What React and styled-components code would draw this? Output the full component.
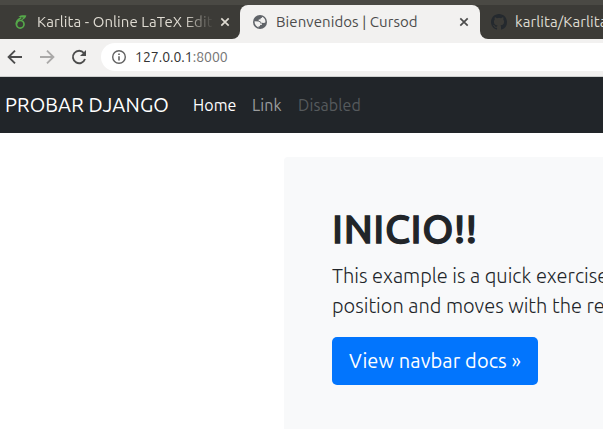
import React from "react";
import styled, { createGlobalStyle } from "styled-components";

const GlobalStyle = createGlobalStyle`
  *, *::before, *::after { box-sizing: border-box; }
  body {
    margin: 0;
    overflow: hidden;
    background: #fff;
    font-family: "Ubuntu", "Noto Sans", "Open Sans", sans-serif;
  }
`;

const Window = styled.div`
  width: 603px;
  height: 429px;
  overflow: hidden;
  display: flex;
  flex-direction: column;
`;

const TabStrip = styled.div`
  flex: none;
  height: 39px;
  padding-top: 5px;
  background: linear-gradient(#4a4944 0, #4a4944 5px, #3c3b37 5px);
  display: flex;
`;

const StripBase = styled.div`
  width: 100%;
  background: #f2f1f0;
  display: flex;
`;

const Tab = styled.div`
  flex: none;
  width: ${(p) => p.$width}px;
  height: 34px;
  padding: ${(p) => p.$padding};
  display: flex;
  align-items: center;
  background: ${(p) => (p.$active ? "#f2f1f0" : "#3c3b37")};
  color: ${(p) => (p.$active ? "#4c4c4c" : "#dfdbd2")};
  border-radius: ${(p) => p.$radius};
`;

const TabBack = styled.div`
  flex: none;
  background: linear-gradient(#3c3b37 50%, #f2f1f0 50%);
`;

const TabTitle = styled.span`
  flex: none;
  width: ${(p) => p.$width}px;
  overflow: hidden;
  white-space: nowrap;
  font-size: 15px;
  line-height: 20px;
  letter-spacing: 0.08px;
  mask-image: ${(p) => (p.$fade ? "linear-gradient(to right, #000 84%, transparent 101%)" : "none")};
`;

const TabGap = styled.span`
  flex: none;
  width: 8px;
`;

const Icon = styled.svg`
  flex: none;
  display: block;
  width: ${(p) => p.$size}px;
  height: ${(p) => p.$size}px;
  margin-right: ${(p) => p.$gap || 0}px;
`;

const Toolbar = styled.div`
  flex: none;
  height: 38px;
  padding: 4px 0 5px 5px;
  background: #f2f1f0;
  border-bottom: 1px solid #cdcfce;
  display: flex;
  align-items: center;
`;

const AddressBar = styled.div`
  flex: 1;
  height: 28px;
  padding-left: 10px;
  border-radius: 14px 0 0 14px;
  background: #fff;
  display: flex;
  align-items: center;
`;

const Address = styled.span`
  font-size: 14px;
  line-height: 20px;
  color: #333;
`;

const Port = styled.span`
  color: #757575;
`;

const Navbar = styled.nav`
  flex: none;
  height: 56px;
  padding-left: 5px;
  background: #212529;
  display: flex;
  align-items: center;
`;

const Brand = styled.a`
  width: 188px;
  color: #fff;
  font-size: 20px;
  line-height: 30px;
  letter-spacing: 0.12px;
  white-space: nowrap;
`;

const NavLink = styled.a`
  width: ${(p) => p.$width}px;
  color: ${(p) => p.$color};
  font-size: 16px;
  line-height: 24px;
  letter-spacing: 0.1px;
  white-space: nowrap;
`;

const Main = styled.main`
  flex: 1;
  padding: 24px 0 0 284px;
  background: #fff;
`;

const Hero = styled.section`
  width: 600px;
  height: 300px;
  padding: 48px;
  border-radius: 4px;
  background: #f8f9fa;
  color: #212529;
`;

const Heading = styled.h1`
  margin: 0 0 8px;
  font-size: 40px;
  line-height: 48px;
  font-weight: 500;
  letter-spacing: 0.6px;
  -webkit-text-stroke: 1.3px #212529;
`;

const Lead = styled.p`
  margin: 0 0 16px;
  font-size: 20px;
  line-height: 30px;
  font-weight: 300;
  white-space: nowrap;
`;

const LeadLine = styled.span`
  display: block;
`;

const Button = styled.a`
  display: inline-flex;
  align-items: center;
  justify-content: center;
  width: 206px;
  height: 48px;
  border-radius: 5px;
  background: #0275fd;
  color: #fff;
  font-size: 20px;
  line-height: 30px;
  letter-spacing: 0.1px;
  white-space: nowrap;
`;

const Close = ({ color }) => (
  <Icon $size={10} viewBox="0 0 10 10">
    <path d="M1.3 1.3 8.7 8.7M8.7 1.3 1.3 8.7" stroke={color} strokeWidth="1.7" fill="none" />
  </Icon>
);

const LeafIcon = () => (
  <Icon $size={14} $gap={8} viewBox="0 0 14 14">
    <g fill="none" stroke="#55a84a">
      <circle cx="5.2" cy="9.3" r="3.8" strokeWidth="1.7" />
      <path d="M1.4 9.3C1.3 6.2 3 4.3 6.2 2.8" strokeWidth="1.7" />
    </g>
    <path d="M3.4 1.6C5.6.2 8.4 0 11.4.5 11 3.2 8.4 4.9 5 5.6 6.8 4.4 8 3.4 8.6 2.2 6.8 2.8 4.9 2.3 3.4 1.6Z" fill="#55a84a" />
  </Icon>
);

const GlobeIcon = () => (
  <Icon $size={14} $gap={9} viewBox="0 0 14 14">
    <circle cx="7" cy="7" r="7" fill="#5f6368" />
    <path
      d="M1.6 6.3 5.4 6.4C6.7 6.5 7.4 7.3 7.4 8.4L9 8.5 9 9.8 7.1 10 7 11.2 5.6 11.3 5.6 12.4C3.3 11.8 1.4 9.6 1.6 6.3ZM8.9 1.7C11.3 2.5 12.5 4.5 12.5 7.2L11.1 7.9 8.5 7.8C7.5 7.7 7.3 6.9 7.3 6L5.7 5.9 5.7 4.5 7.6 4.2 7.7 3 8.9 2.9Z"
      fill="#f2f1f0"
    />
  </Icon>
);

const GithubIcon = () => (
  <Icon $size={16} $gap={8} viewBox="0 0 16 16">
    <path
      fill="#24292e"
      d="M8 0C3.58 0 0 3.58 0 8c0 3.54 2.29 6.53 5.47 7.59.4.07.55-.17.55-.38 0-.19-.01-.82-.01-1.49-2.01.37-2.53-.49-2.69-.94-.09-.23-.48-.94-.82-1.13-.28-.15-.68-.52-.01-.53.63-.01 1.08.58 1.23.82.72 1.21 1.87.87 2.33.66.07-.52.28-.87.51-1.07-1.78-.2-3.64-.89-3.64-3.95 0-.87.31-1.59.82-2.15-.08-.2-.36-1.02.08-2.12 0 0 .67-.21 2.2.82a7.6 7.6 0 0 1 4 0c1.53-1.04 2.2-.82 2.2-.82.44 1.1.16 1.92.08 2.12.51.56.82 1.27.82 2.15 0 3.07-1.87 3.75-3.65 3.95.29.25.54.73.54 1.48 0 1.07-.01 1.93-.01 2.2 0 .21.15.46.55.38A8.01 8.01 0 0 0 16 8c0-4.42-3.58-8-8-8Z"
    />
  </Icon>
);

const BackIcon = () => (
  <Icon $size={20} $gap={12} viewBox="0 0 20 20">
    <path d="M17 10H4M10 3.6 3.6 10 10 16.4" fill="none" stroke="#4c4c4c" strokeWidth="1.9" />
  </Icon>
);

const ForwardIcon = () => (
  <Icon $size={20} $gap={12} viewBox="0 0 20 20">
    <path d="M3 10H16M10 3.6 16.4 10 10 16.4" fill="none" stroke="#aaa9a8" strokeWidth="1.9" />
  </Icon>
);

const ReloadIcon = () => (
  <Icon $size={20} $gap={12} viewBox="0 0 20 20">
    <path d="M14.9 6A6.2 6.2 0 1 0 16 12" fill="none" stroke="#4c4c4c" strokeWidth="1.9" />
    <path d="M17 3V9H11Z" fill="#4c4c4c" />
  </Icon>
);

const InfoIcon = () => (
  <Icon $size={16} $gap={8} viewBox="0 0 16 16">
    <circle cx="8" cy="8" r="6.3" fill="none" stroke="#616161" strokeWidth="1.4" />
    <path d="M7.2 7.2H8.8V11.4H7.2ZM7.2 4.5H8.8V6H7.2Z" fill="#616161" />
  </Icon>
);

export default function App() {
  return (
    <>
      <GlobalStyle />
      <Window>
        <TabStrip>
          <StripBase>
            <Tab $width={240} $padding="0 0 0 15px" $radius="0 0 8px 0">
              <LeafIcon />
              <TabTitle $width={175} $fade>Karlita - Online LaTeX Editor</TabTitle>
              <TabGap />
              <Close color="#dfdbd2" />
            </Tab>
            <TabBack>
              <Tab $active $width={240} $padding="0 0 0 13px" $radius="8px 8px 0 0">
                <GlobeIcon />
                <TabTitle $width={183}>Bienvenidos | Cursod</TabTitle>
                <Close color="#4c4c4c" />
              </Tab>
            </TabBack>
            <Tab $width={123} $padding="0 0 0 11px" $radius="0 0 0 8px">
              <GithubIcon />
              <TabTitle $width={88}>karlita/Karlita</TabTitle>
            </Tab>
          </StripBase>
        </TabStrip>
        <Toolbar>
          <BackIcon />
          <ForwardIcon />
          <ReloadIcon />
          <AddressBar>
            <InfoIcon />
            <Address>127.0.0.1<Port>:8000</Port></Address>
          </AddressBar>
        </Toolbar>
        <Navbar>
          <Brand>PROBAR DJANGO</Brand>
          <NavLink $width={59} $color="#fff">Home</NavLink>
          <NavLink $width={46} $color="#9b9d9e">Link</NavLink>
          <NavLink $width={70} $color="#565a5d">Disabled</NavLink>
        </Navbar>
        <Main>
          <Hero>
            <Heading>INICIO!!</Heading>
            <Lead>
              <LeadLine>This example is a quick exercise</LeadLine>
              <LeadLine>position and moves with the re</LeadLine>
            </Lead>
            <Button>View navbar docs »</Button>
          </Hero>
        </Main>
      </Window>
    </>
  );
}
